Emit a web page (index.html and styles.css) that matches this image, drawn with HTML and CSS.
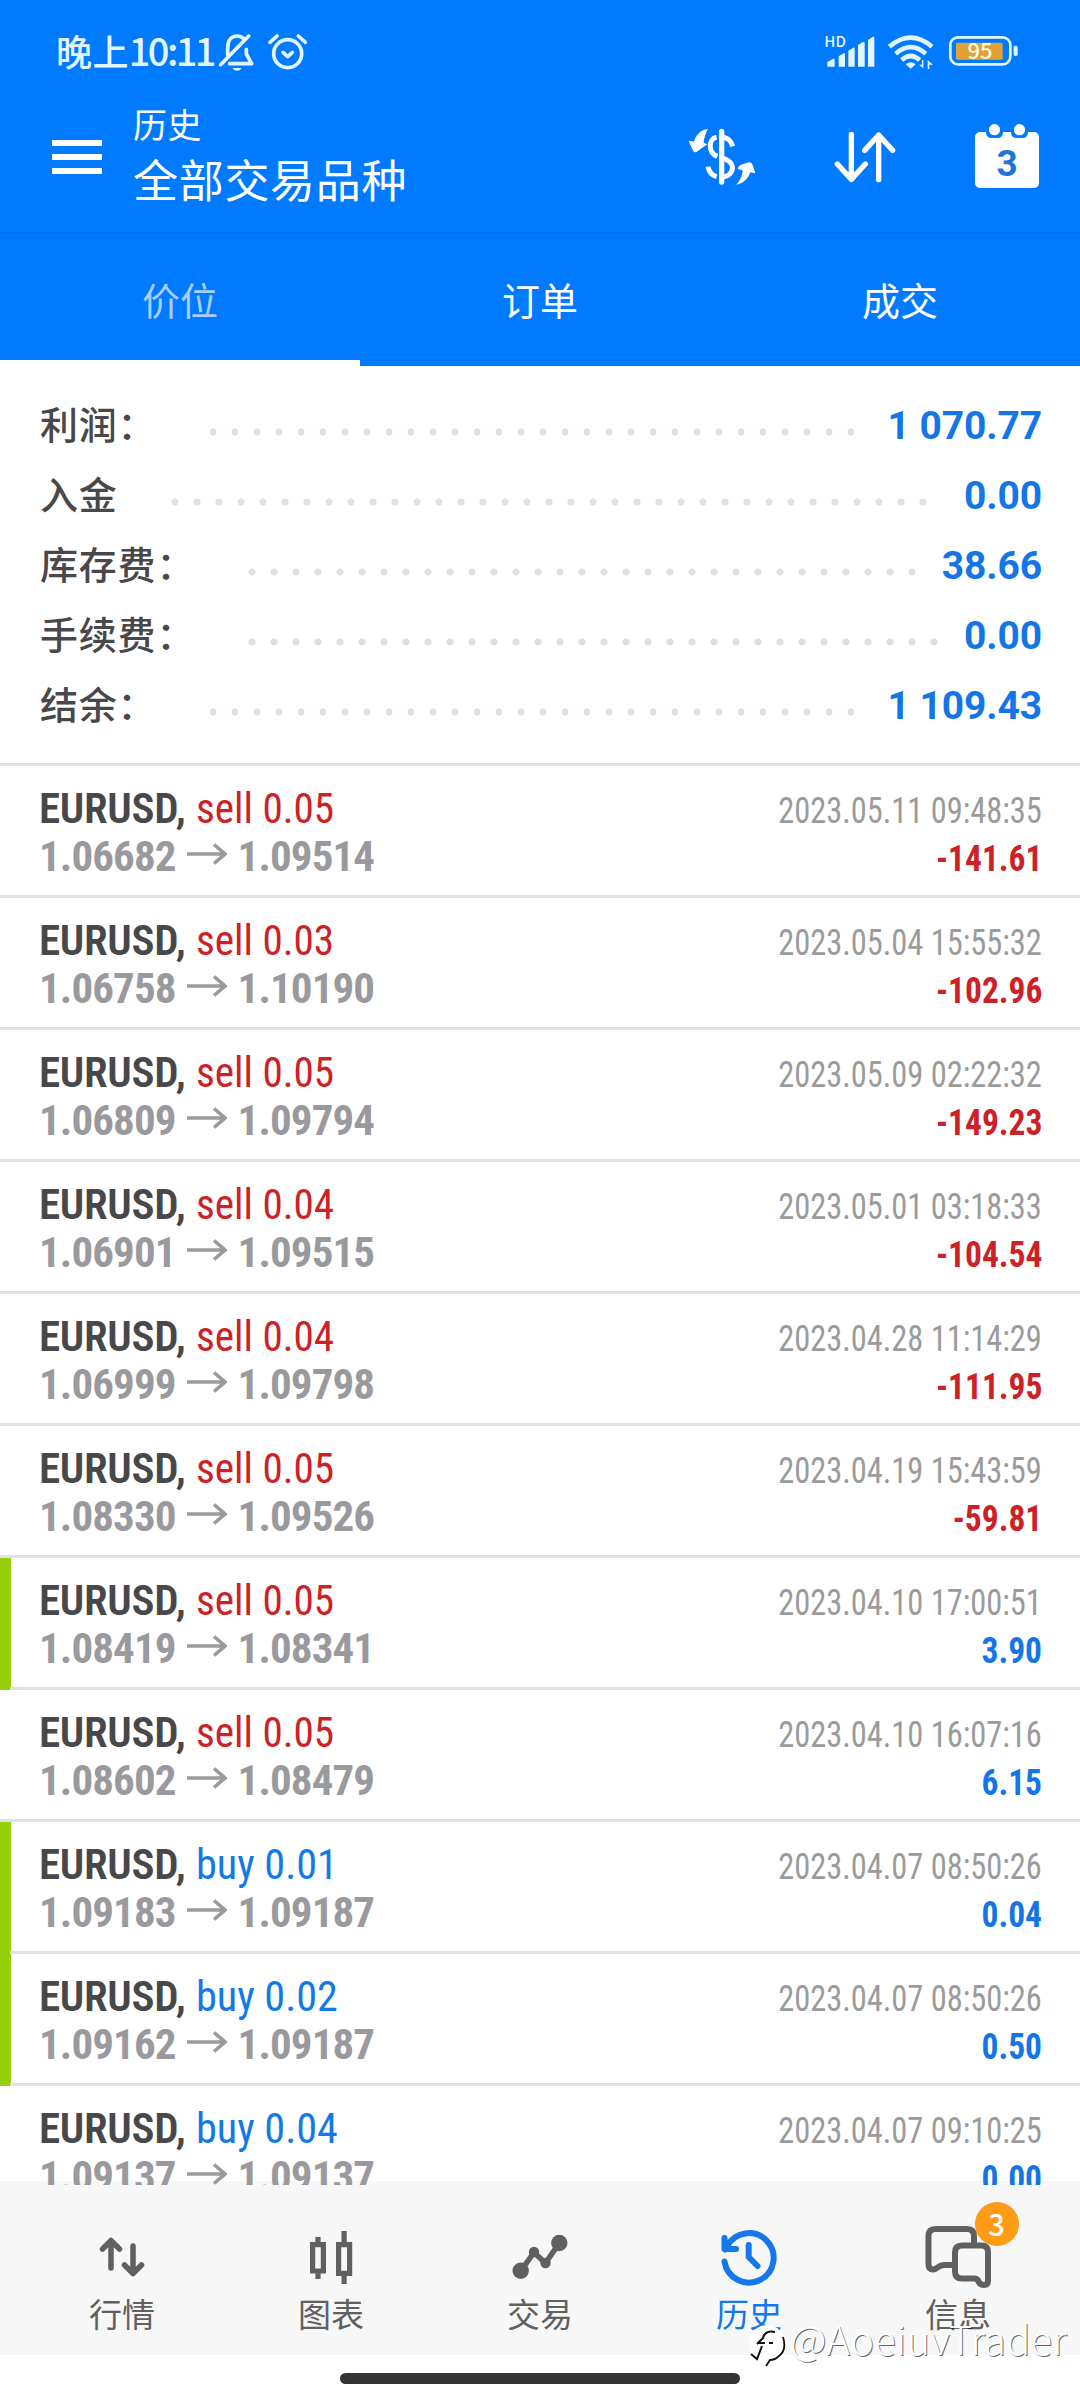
FILE: index.html
```html
<!DOCTYPE html>
<html lang="zh-CN">
<head>
<meta charset="utf-8">
<title>历史</title>
<link rel="stylesheet" href="styles.css">
</head>
<body>
<header class="header">
  <div class="status">
    <div class="clock">晚上<span class="clock-digits">10:11</span></div>
    <svg class="status-left" viewBox="30 36 270 120" fill="none" stroke="#e2f6ff" stroke-width="11" stroke-linecap="round" stroke-linejoin="round">
      <path d="M56 106V84C56 60 68 48 84 48C93 48 99 51 104 56"/>
      <path d="M119 48L35 134"/>
      <path d="M112 88V102L128 131H62"/>
      <path d="M70 144H98Q94 152 84 152T70 144Z" fill="#e2f6ff" stroke="none"/>
      <circle cx="236" cy="101" r="42"/>
      <path d="M222 97L236 110L250 97M183 67L204 48M268 48L289 67"/>
    </svg>
    <svg class="status-right" viewBox="45 24 582 120" fill="#e2f6ff">
      <text x="43" y="68" class="hd">HD</text>
      <path d="M52 128V114L70 104Q74 103 74 107V128ZM86 128V97L101 88Q105 87 105 91V128ZM115 128V80L130 71Q134 70 134 74V128ZM144 128V63L159 54Q164 53 164 57V128ZM174 128V48L189 38Q193 37 193 42V128Z"/>
      <g fill="none" stroke="#e2f6ff" stroke-width="14">
        <path d="M238 68Q302 14 366 68"/>
        <path d="M257 89Q302 50 347 89"/>
        <path d="M275 108Q302 84 329 108"/>
      </g>
      <path d="M287 121Q302 108 317 121L302 134Z"/>
      <path d="M340 108V133L327 122H336V108ZM353 135V108L369 122H358V135Z"/>
      <rect x="421" y="40" width="180" height="81" rx="23" fill="none" stroke="#e2f6ff" stroke-width="8"/>
      <rect x="438" y="56" width="140" height="51" rx="4" fill="#e0a235"/>
      <rect x="611" y="65" width="12" height="31" rx="5"/>
      <text x="510" y="106" class="charge">95</text>
    </svg>
  </div>
  <div class="appbar">
    <svg class="menu" viewBox="0 0 50 34" fill="#fff"><path d="M0 0h50v6H0zM0 14h50v6H0zM0 28h50v6H0z"/></svg>
    <div class="titles">
      <div class="section">历史</div>
      <div class="title">全部交易品种</div>
    </div>
    <svg class="ic-currency" viewBox="24 24 204 174">
      <g fill="none" stroke="#fff" stroke-width="15" stroke-linecap="butt">
        <path d="M110 52C84 56 84 98 112 109"/>
        <path d="M126 52C144 52 153 62 158 79"/>
        <path d="M84 140C87 158 96 166 110 170"/>
        <path d="M126 114C170 124 164 166 130 171"/>
      </g>
      <path d="M125 34V186" stroke="#fff" stroke-width="16" stroke-linecap="round"/>
      <path d="M84 26C76 40 73 52 71 68L82 73L49 96Q43 98 39 92L26 63Q34 62 42 65C47 44 62 30 84 26Z" fill="#fff"/>
      <path d="M169 194C180 182 186 170 188 151L173 147Q174 138 183 134L207 127Q215 126 218 135L226 160L211 157C204 176 192 190 169 194Z" fill="#fff"/>
    </svg>
    <svg class="ic-sort" viewBox="462 32 186 156" fill="none" stroke="#fff" stroke-width="16" stroke-linecap="round" stroke-linejoin="round">
      <path d="M514 42V177M472 131L514 177L556 131M596 178V44M554 90L596 44L638 90"/>
    </svg>
    <svg class="ic-calendar" viewBox="0 0 64 64">
      <rect x="0" y="8" width="64" height="56" rx="5" fill="#fff"/>
      <path d="M11 6v2q0 6 6 6h5q6 0 6-6V6zM36 6v2q0 6 6 6h5q6 0 6-6V6z" fill="#007aff"/>
      <circle cx="19.500" cy="5.700" r="5.600" fill="#fff"/><circle cx="44.500" cy="5.700" r="5.600" fill="#fff"/>
      <text x="32" y="52" class="cal-day">3</text>
    </svg>
  </div>
  <nav class="tabs">
    <div class="tab active">价位</div>
    <div class="tab">订单</div>
    <div class="tab">成交</div>
  </nav>
</header>

<section class="summary">
  <div class="sum-row"><span>利润：</span><i class="dots"></i><b>1 070.77</b></div>
  <div class="sum-row"><span>入金</span><i class="dots"></i><b>0.00</b></div>
  <div class="sum-row"><span>库存费：</span><i class="dots"></i><b>38.66</b></div>
  <div class="sum-row"><span>手续费：</span><i class="dots"></i><b>0.00</b></div>
  <div class="sum-row"><span>结余：</span><i class="dots"></i><b>1 109.43</b></div>
</section>

<svg class="defs"><symbol id="arrow" viewBox="0 0 40 22"><path d="M0 11H37M27 1.500L38 11L27 20.500" fill="none" stroke="#9a9a9e" stroke-width="3.600"/></symbol></svg>

<main class="deals">
  <div class="deal"><div class="line"><span class="sym">EURUSD,</span><span class="side sell">sell 0.05</span><span class="time">2023.05.11 09:48:35</span></div><div class="line"><span class="price">1.06682</span><svg class="arr"><use href="#arrow"/></svg><span class="price">1.09514</span><span class="pl neg">-141.61</span></div></div>
  <div class="deal"><div class="line"><span class="sym">EURUSD,</span><span class="side sell">sell 0.03</span><span class="time">2023.05.04 15:55:32</span></div><div class="line"><span class="price">1.06758</span><svg class="arr"><use href="#arrow"/></svg><span class="price">1.10190</span><span class="pl neg">-102.96</span></div></div>
  <div class="deal"><div class="line"><span class="sym">EURUSD,</span><span class="side sell">sell 0.05</span><span class="time">2023.05.09 02:22:32</span></div><div class="line"><span class="price">1.06809</span><svg class="arr"><use href="#arrow"/></svg><span class="price">1.09794</span><span class="pl neg">-149.23</span></div></div>
  <div class="deal"><div class="line"><span class="sym">EURUSD,</span><span class="side sell">sell 0.04</span><span class="time">2023.05.01 03:18:33</span></div><div class="line"><span class="price">1.06901</span><svg class="arr"><use href="#arrow"/></svg><span class="price">1.09515</span><span class="pl neg">-104.54</span></div></div>
  <div class="deal"><div class="line"><span class="sym">EURUSD,</span><span class="side sell">sell 0.04</span><span class="time">2023.04.28 11:14:29</span></div><div class="line"><span class="price">1.06999</span><svg class="arr"><use href="#arrow"/></svg><span class="price">1.09798</span><span class="pl neg">-111.95</span></div></div>
  <div class="deal"><div class="line"><span class="sym">EURUSD,</span><span class="side sell">sell 0.05</span><span class="time">2023.04.19 15:43:59</span></div><div class="line"><span class="price">1.08330</span><svg class="arr"><use href="#arrow"/></svg><span class="price">1.09526</span><span class="pl neg">-59.81</span></div></div>
  <div class="deal tp"><div class="line"><span class="sym">EURUSD,</span><span class="side sell">sell 0.05</span><span class="time">2023.04.10 17:00:51</span></div><div class="line"><span class="price">1.08419</span><svg class="arr"><use href="#arrow"/></svg><span class="price">1.08341</span><span class="pl">3.90</span></div></div>
  <div class="deal"><div class="line"><span class="sym">EURUSD,</span><span class="side sell">sell 0.05</span><span class="time">2023.04.10 16:07:16</span></div><div class="line"><span class="price">1.08602</span><svg class="arr"><use href="#arrow"/></svg><span class="price">1.08479</span><span class="pl">6.15</span></div></div>
  <div class="deal tp"><div class="line"><span class="sym">EURUSD,</span><span class="side buy">buy 0.01</span><span class="time">2023.04.07 08:50:26</span></div><div class="line"><span class="price">1.09183</span><svg class="arr"><use href="#arrow"/></svg><span class="price">1.09187</span><span class="pl">0.04</span></div></div>
  <div class="deal tp"><div class="line"><span class="sym">EURUSD,</span><span class="side buy">buy 0.02</span><span class="time">2023.04.07 08:50:26</span></div><div class="line"><span class="price">1.09162</span><svg class="arr"><use href="#arrow"/></svg><span class="price">1.09187</span><span class="pl">0.50</span></div></div>
  <div class="deal"><div class="line"><span class="sym">EURUSD,</span><span class="side buy">buy 0.04</span><span class="time">2023.04.07 09:10:25</span></div><div class="line"><span class="price">1.09137</span><svg class="arr"><use href="#arrow"/></svg><span class="price">1.09137</span><span class="pl">0.00</span></div></div>
</main>

<nav class="bottom">
  <div class="item">
    <svg viewBox="0 0 80 70" fill="none" stroke="#606060" stroke-width="5.500" stroke-linecap="round" stroke-linejoin="round"><path d="M29 43V16M20.500 24L29 15.500L37.500 24M51 21V48M42.500 40L51 48.500L59.500 40"/></svg>
    <span>行情</span>
  </div>
  <div class="item">
    <svg viewBox="0 0 80 70" fill="none" stroke="#606060" stroke-width="5.200"><path d="M21.600 19.600h10.800v26.400H21.600zM27 12v8M27 46v8M47.600 19.600h11v28.800h-11zM53.100 6v13M53.100 48v11"/></svg>
    <span>图表</span>
  </div>
  <div class="item">
    <svg viewBox="0 0 80 70" fill="#606060"><path d="M21 45.700L34 27.500L45.500 38L59.300 18" fill="none" stroke="#606060" stroke-width="5.500"/><circle cx="20.700" cy="45.700" r="8.200"/><circle cx="34" cy="27" r="5.200"/><circle cx="45.500" cy="38" r="5.200"/><circle cx="59.300" cy="18" r="8.200"/></svg>
    <span>交易</span>
  </div>
  <div class="item on">
    <svg viewBox="0 0 80 70" fill="none" stroke="#1478ec" stroke-width="6" stroke-linecap="round" stroke-linejoin="round"><path d="M15.500 36.500A24.700 24.700 0 1 0 18 21.500L16 24.500M15.500 13V24H27M39.700 20V32L48.500 41"/></svg>
    <span>历史</span>
  </div>
  <div class="item">
    <svg viewBox="0 0 80 70" fill="none" stroke="#606060" stroke-width="6" stroke-linejoin="round"><path d="M36 40H26C20 40 19 44.500 15 44.500Q10.500 44.500 10.500 39V11Q10.500 4 17.500 4H49Q56 4 56 11V20"/><path d="M44 20.500H63.500Q70 20.500 70 27V56Q70 60 66 60Q62 60 60.500 56.500Q59.500 53.500 56 53.500H44Q37 53.500 37 46.500V27.500Q37 20.500 44 20.500Z"/></svg>
    <span>信息</span>
    <em class="badge">3</em>
  </div>
</nav>
<div class="gesture"><i></i></div>

<div class="credit">
  <svg viewBox="0 0 40 44"><circle cx="20" cy="18" r="18" fill="#fff"/><path d="M36 12Q40 25 32 31Q28 35 23 35L19 41" fill="none" stroke="#111" stroke-width="1.800"/><path d="M28 7Q18 5 16 13L10 19M11 18L18 18M22 18L26 18M15 21L10 34L4 29" fill="none" stroke="#111" stroke-width="2"/></svg>
  <span>@AoeiuvTrader</span>
</div>
</body>
</html>
```
FILE: styles.css
```css
* { box-sizing: border-box; }
body {
  margin: 0;
  width: 1080px;
  height: 2400px;
  overflow: hidden;
  position: relative;
  background: #fff;
  font-family: Roboto, "Noto Sans CJK SC", sans-serif;
  display: flex;
  flex-direction: column;
}
svg { display: block; flex: none; }
.defs { width: 0; height: 0; }

.header { background: #007aff; height: 366px; color: #fff; flex: none; }
.status { height: 104px; display: flex; align-items: center; padding: 0 61px 0 56px; }
.clock {
  font: 500 36px/44px "Noto Sans CJK SC", sans-serif;
  letter-spacing: 0.4px;
  color: #e2f6ff;
  width: 163px;
  white-space: nowrap;
  padding-bottom: 4px;
}
.clock-digits { font-size: 38px; letter-spacing: -2.6px; }
.status-left { width: 90px; height: 40px; }
.status-right { width: 194px; height: 40px; margin-left: auto; overflow: visible; }
.hd { font: 500 45px "Noto Sans CJK SC", sans-serif; }
.charge { font: 500 66px "Noto Sans CJK SC", sans-serif; fill: #fff8e8; text-anchor: middle; }

.appbar { height: 128px; display: flex; padding-left: 52px; }
.menu { width: 50px; height: 34px; margin-top: 36px; }
.titles { margin-left: 31px; width: 555px; font-family: "Noto Sans CJK SC", sans-serif; }
.section { font-size: 34px; line-height: 39px; letter-spacing: 0.5px; }
.title { font-size: 45px; line-height: 71px; letter-spacing: 0.7px; }
.ic-currency { width: 68px; height: 58px; margin-top: 24px; }
.ic-sort { width: 62px; height: 52px; margin: 27px 0 0 78px; }
.ic-calendar { width: 64px; height: 64px; margin: 20px 0 0 79px; }
.cal-day { font: 700 37px Roboto, sans-serif; fill: #1b76d8; text-anchor: middle; }

.tabs { height: 134px; display: flex; border-top: 2px solid #0071ee; }
.tab {
  flex: 1;
  text-align: center;
  font: 38px/129px "Noto Sans CJK SC", sans-serif;
}
.tab.active { color: #a9cdf5; box-shadow: inset 0 -6px #fff; }

.summary { height: 400px; flex: none; padding: 23px 38px 0 40px; border-bottom: 3px solid #e2e2e2; }
.sum-row { display: flex; height: 70px; line-height: 70px; }
.sum-row span { font: 500 38px/67px "Noto Sans CJK SC", sans-serif; letter-spacing: 0.8px; color: #48484a; }
.sum-row b { font: 700 39px/74px Roboto, sans-serif; letter-spacing: -0.1px; color: #1475e6; }
.dots {
  flex: 1;
  height: 22px;
  margin: 32px 25px 0 53px;
  background: radial-gradient(circle at 4px 11px, #e0e0e0 3.200px, transparent 3.900px) 0 0 / 22px 22px;
}

.deals {
  height: 1419px;
  flex: none;
  overflow: hidden;
  background: linear-gradient(#f7f7f7, #f7f7f7) bottom / 100% 4px no-repeat;
  font-family: Roboto, sans-serif;
  font-stretch: 75%;
}
.deal { height: 132px; padding: 18px 38px 0 39px; border-bottom: 3px solid #e2e2e2; }
.deal.tp { background: linear-gradient(#96d00a, #96d00a) 0 0 / 11px 100% no-repeat border-box; border-image: linear-gradient(90deg, #96d00a 11px, #e2e2e2 11px) 1; border-width: 0 0 3px; }
.line { display: flex; align-items: baseline; height: 48px; line-height: 48px; }
.sym { font-size: 43px; font-weight: 600; color: #48484a; width: 157px; letter-spacing: -0.3px; }
.side { font-size: 43px; transform-origin: 0 50%; }
.sell { color: #cc2127; transform: scaleX(0.957); }
.buy { color: #1478e8; transform: scaleX(0.98); }
.time, .pl { margin-left: auto; font-size: 36px; transform-origin: 100% 50%; }
.time { color: #9b9b9b; transform: scaleX(0.9); }
.pl { font-weight: 700; color: #1475e6; transform: scaleX(0.93); }
.pl.neg { color: #cc2127; }
.price { font-size: 43px; font-weight: 700; color: #9a9a9e; letter-spacing: -0.9px; }
.arr { width: 40px; height: 22px; margin: 0 11px 0 11px; transform: translateY(-6px); }

.bottom { height: 170px; flex: none; background: #f7f7f7; display: flex; padding: 40px 17.5px 0; }
.item { flex: 1; position: relative; display: flex; flex-direction: column; align-items: center; color: #606060; }
.item svg { width: 80px; height: 70px; overflow: visible; }
.item span { font: 400 33px/37px "Noto Sans CJK SC", sans-serif; }
.item.on { color: #1478ec; }
.badge {
  position: absolute;
  left: 121px;
  top: -23px;
  width: 44px;
  height: 44px;
  border-radius: 50%;
  background: #ff9b17;
  color: #fff;
  text-align: center;
  font: 500 29px/43px "Noto Sans CJK SC", sans-serif;
}
.gesture { height: 45px; padding-top: 18px; }
.gesture i { display: block; width: 400px; height: 11px; margin: 0 auto; border-radius: 6px; background: #333; }

.credit { position: absolute; left: 747px; top: 2325px; display: flex; align-items: flex-start; }
.credit svg { width: 40px; height: 44px; }
.credit span {
  margin: -7px 0 0 3px;
  font: 300 40px/40px "Noto Sans CJK SC", sans-serif;
  letter-spacing: 0.2px;
  color: #fff;
  text-shadow: 1px 1px 0 rgba(0, 0, 0, 0.6);
}
```
